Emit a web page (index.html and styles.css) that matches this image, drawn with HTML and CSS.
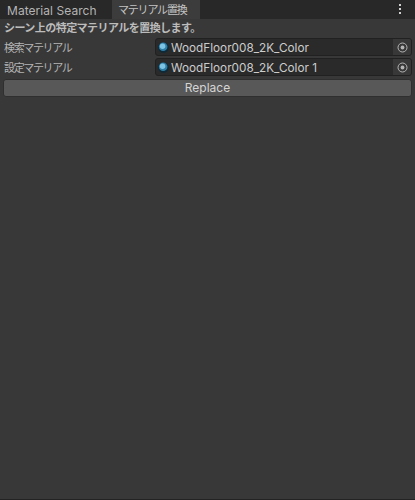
FILE: index.html
```html
<!DOCTYPE html>
<html lang="ja">
<head>
<meta charset="utf-8">
<title>マテリアル置換</title>
<link rel="stylesheet" href="styles.css">
</head>
<body>
<div class="window">
  <div class="tabbar">
    <div class="tab">Material Search</div>
    <div class="tab tab-active">マテリアル置換</div>
    <div class="menu" aria-hidden="true"><i></i><i></i><i></i></div>
  </div>
  <div class="content">
    <div class="heading">シーン上の特定マテリアルを置換します。</div>
    <div class="row">
      <div class="label">検索マテリアル</div>
      <div class="field">
        <svg class="ball" viewBox="0 0 12 12"><circle cx="6" cy="6" r="5.8" fill="#0e2a38"/><circle cx="5.6" cy="5.2" r="4.7" fill="#2f7ea6"/><circle cx="5" cy="4.5" r="3" fill="#7cc3e4"/></svg>
        <span class="value">WoodFloor008_2K_Color</span>
        <div class="picker"><svg viewBox="0 0 11 11"><circle cx="5.5" cy="5.5" r="4.5" fill="none" stroke="#b4b4b4" stroke-width="1"/><circle cx="5.5" cy="5.5" r="1.9" fill="#b4b4b4"/></svg></div>
      </div>
    </div>
    <div class="row">
      <div class="label">設定マテリアル</div>
      <div class="field">
        <svg class="ball" viewBox="0 0 12 12"><circle cx="6" cy="6" r="5.8" fill="#0e2a38"/><circle cx="5.6" cy="5.2" r="4.7" fill="#2f7ea6"/><circle cx="5" cy="4.5" r="3" fill="#7cc3e4"/></svg>
        <span class="value">WoodFloor008_2K_Color 1</span>
        <div class="picker"><svg viewBox="0 0 11 11"><circle cx="5.5" cy="5.5" r="4.5" fill="none" stroke="#b4b4b4" stroke-width="1"/><circle cx="5.5" cy="5.5" r="1.9" fill="#b4b4b4"/></svg></div>
      </div>
    </div>
    <div class="button">Replace</div>
  </div>
</div>
</body>
</html>
```
FILE: styles.css
```css
* { box-sizing: border-box; }
html, body { margin: 0; height: 100%; }
body {
  background: #383838;
  color: #c4c4c4;
  font-family: Inter, "Noto Sans CJK JP", sans-serif;
  font-size: 12px;
  overflow: hidden;
}
.window {
  height: 500px;
  display: flex;
  flex-direction: column;
  border-bottom: 1px solid #232323;
}
.tabbar {
  height: 19px;
  flex: none;
  background: #282828;
  display: flex;
  align-items: stretch;
}
.tab {
  width: 112px;
  padding: 2px 0 0 7px;
  color: #b4b4b4;
  line-height: 17px;
  letter-spacing: 0.05px;
}
.tab-active {
  width: 88px;
  padding-left: 6px;
  background: #3c3c3c;
  color: #c4c4c4;
  font-size: 11px;
  letter-spacing: -1.2px;
}
.menu {
  margin-left: auto;
  width: 16px;
  margin-right: 7px;
  display: flex;
  flex-direction: column;
  align-items: center;
  gap: 2px;
  padding-top: 4px;
}
.menu i { width: 2px; height: 2px; background: #d0d0d0; }
.content {
  flex: 1;
  padding: 0 3px;
  display: flex;
  flex-direction: column;
}
.heading {
  height: 19px;
  padding-left: 1px;
  line-height: 19px;
  font-weight: 700;
  font-size: 11px;
  letter-spacing: -0.55px;
  color: #bcbcbc;
}
.row {
  height: 20px;
  display: flex;
  align-items: flex-start;
}
.label {
  width: 152px;
  flex: none;
  padding: 1px 0 0 1px;
  font-size: 11px;
  letter-spacing: -1.35px;
  line-height: 18px;
  color: #b4b4b4;
}
.field {
  flex: 1;
  height: 18px;
  display: flex;
  align-items: center;
  background: #2a2a2a;
  border: 1px solid #212121;
  border-radius: 3px;
  overflow: hidden;
}
.ball { width: 11px; height: 11px; margin-left: 2px; flex: none; }
.value { margin-left: 2px; padding-top: 1px; flex: 1; color: #cccccc; white-space: nowrap; font-size: 11.75px; }
.picker {
  width: 18px;
  height: 16px;
  background: #383838;
  display: flex;
  align-items: center;
  justify-content: center;
}
.picker svg { width: 11px; height: 11px; }
.button {
  height: 18px;
  margin-top: 1px;
  background: #585858;
  border: 1px solid #2f2f2f;
  border-radius: 3px;
  text-align: center;
  line-height: 16px;
  color: #d4d4d4;
}
```
